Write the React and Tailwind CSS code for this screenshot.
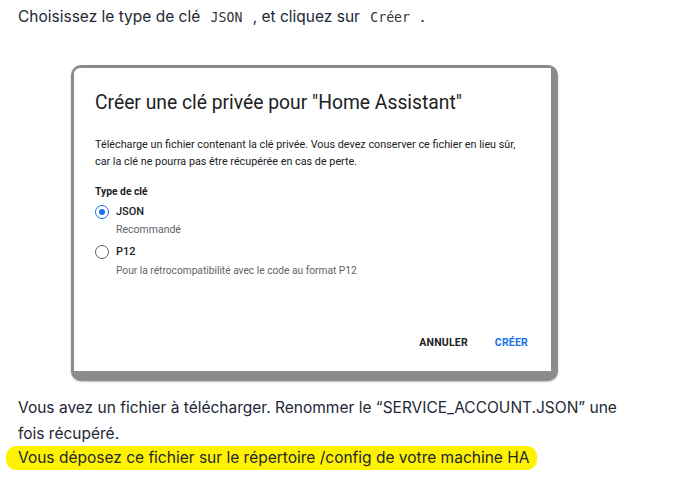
export default function App() {
  return (
    <div className="min-h-[499px] w-[683px] bg-white pl-[18px] pt-[4px] font-['Inter',sans-serif] text-[15.5px] text-[#222836]">
      <p className="leading-[26px]">
        Choisissez le type de clé{" "}
        <code className="px-[6px] font-['DejaVu_Sans_Mono',monospace] text-[13.2px] text-[#333]">JSON</code> , et cliquez sur{" "}
        <code className="px-[6px] font-['DejaVu_Sans_Mono',monospace] text-[13.2px] text-[#333]">Créer</code> .
      </p>

      <div className="ml-[53px] mt-[34px] w-[487px] rounded-[10px] bg-[#8b8b8b] pb-[10px] pl-[3px] pr-[7px] pt-[3px] shadow-[0_1px_2px_rgba(0,0,0,0.25)]">
        <div className="h-[303px] rounded-tl-[6px] bg-white pl-[21px] pr-[23px] pt-[22px] font-['Roboto',sans-serif] text-[#202124]">
          <h2 className="text-[19.3px] leading-[26px]">Créer une clé privée pour "Home Assistant"</h2>
          <p className="mt-[20px] text-[10.8px] leading-[17px] text-[#202124]">
            Télécharge un fichier contenant la clé privée. Vous devez conserver ce fichier en lieu sûr,
            <br />
            car la clé ne pourra pas être récupérée en cas de perte.
          </p>
          <div className="mt-[15px] text-[10.3px] font-bold leading-[14px]">Type de clé</div>
          <div className="mt-[5px] flex items-center gap-[7px]">
            <span className="flex h-[14px] w-[14px] items-center justify-center rounded-full border-[1.7px] border-[#1a73e8]">
              <span className="h-[6px] w-[6px] rounded-full bg-[#1a73e8]" />
            </span>
            <span className="text-[11px] font-medium leading-[16px]">JSON</span>
          </div>
          <div className="mt-[2px] pl-[21px] text-[10.5px] leading-[16px] text-[#5f6368]">Recommandé</div>
          <div className="mt-[6px] flex items-center gap-[7px]">
            <span className="h-[14px] w-[14px] rounded-full border-[1.7px] border-[#5f6368]" />
            <span className="text-[11px] font-medium leading-[16px]">P12</span>
          </div>
          <div className="mt-[3px] pl-[21px] text-[10.2px] leading-[16px] text-[#5f6368]">
            Pour la rétrocompatibilité avec le code au format P12
          </div>
          <div className="mt-[56px] flex justify-end gap-[27px] text-[10.5px] font-bold tracking-[0.2px]">
            <span className="text-[#202124]">ANNULER</span>
            <span className="text-[#1a73e8]">CRÉER</span>
          </div>
        </div>
      </div>

      <p className="mt-[14px] pr-[60px] leading-[26px]">
        Vous avez un fichier à télécharger. Renommer le “SERVICE_ACCOUNT.JSON” une fois récupéré.
      </p>
      <p className="-ml-[12px] mt-[-1px] w-fit rounded-[10px] bg-[#fff200] pl-[12px] pr-[8px] leading-[24px]">
        Vous déposez ce fichier sur le répertoire /config de votre machine HA
      </p>
    </div>
  );
}
